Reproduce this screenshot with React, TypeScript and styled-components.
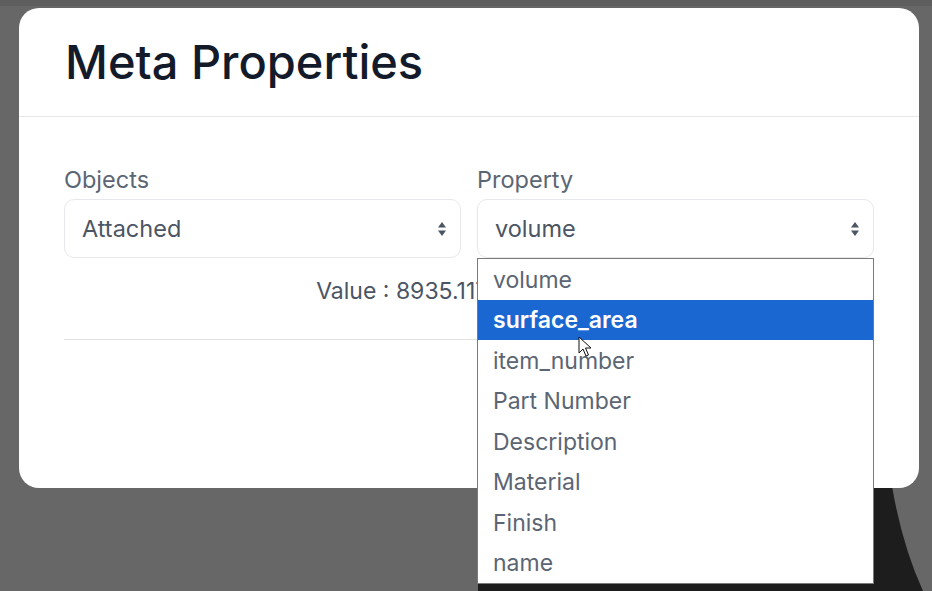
import React from "react";
import styled, { createGlobalStyle } from "styled-components";

const GlobalStyle = createGlobalStyle`
  html, body {
    margin: 0;
    padding: 0;
    background: #676767;
  }
  body {
    font-family: Inter, "Noto Sans", "Liberation Sans", sans-serif;
  }
`;

const Page = styled.div`
  position: relative;
  width: 932px;
  height: 591px;
  overflow: hidden;
  background: #676767;
  padding: 8px 0 0 19px;
  box-sizing: border-box;
`;

const Backdrop = styled.svg`
  position: absolute;
  left: 0;
  top: 0;
  width: 932px;
  height: 591px;
`;

const Modal = styled.div`
  position: relative;
  width: 900px;
  height: 480px;
  background: #ffffff;
  border-radius: 20px;
  box-sizing: border-box;
`;

const Header = styled.div`
  height: 109px;
  display: flex;
  align-items: center;
  padding: 0 0 0 46px;
  border-bottom: 1px solid #e7e7e7;
  box-sizing: border-box;
`;

const Title = styled.h1`
  margin: 0 0 2px;
  font-size: 47px;
  font-weight: 500;
  color: #131a2a;
`;

const Body = styled.div`
  padding: 47px 45px 0;
`;

const FieldRow = styled.div`
  display: grid;
  grid-template-columns: 1fr 1fr;
  column-gap: 16px;
`;

const Field = styled.div`
  position: relative;
  display: flex;
  flex-direction: column;
  gap: 4px;
`;

const Label = styled.label`
  font-size: 23.5px;
  line-height: 31px;
  color: #5b6675;
`;

const Select = styled.div`
  height: 59px;
  display: flex;
  align-items: center;
  justify-content: space-between;
  padding: 0 13px 0 17px;
  border: 1px solid #e6e8eb;
  border-radius: 10px;
  box-sizing: border-box;
  font-size: 23.5px;
  color: #4b5563;
`;

const ValueLine = styled.div`
  margin-top: 19px;
  text-align: center;
  font-size: 23px;
  line-height: 28px;
  color: #4b5563;
  white-space: nowrap;
`;

const Divider = styled.div`
  margin-top: 34px;
  height: 1px;
  background: #e2e2e2;
`;

const Dropdown = styled.ul`
  position: absolute;
  left: 0;
  right: 0;
  top: 94px;
  margin: 0;
  padding: 0;
  list-style: none;
  background: #ffffff;
  border: 1px solid #7a7a7a;
  z-index: 2;
`;

const Option = styled.li<{ $active?: boolean }>`
  height: 40.5px;
  display: flex;
  align-items: center;
  padding: 1px 15px 0;
  box-sizing: border-box;
  font-size: 23px;
  font-weight: ${(p) => (p.$active ? 600 : 400)};
  color: ${(p) => (p.$active ? "#ffffff" : "#5b6573")};
  background: ${(p) => (p.$active ? "#1a67d2" : "transparent")};
`;

const Cursor = styled.svg`
  position: absolute;
  left: 578px;
  top: 336px;
  width: 14px;
  height: 22px;
  z-index: 3;
`;

function SelectArrows() {
  return (
    <svg width="10" height="16" viewBox="0 0 10 16">
      <path d="M5 1 L9 6.5 L1 6.5 Z" fill="#4b5563" />
      <path d="M5 15 L9 9.5 L1 9.5 Z" fill="#4b5563" />
    </svg>
  );
}

const options = [
  "volume",
  "surface_area",
  "item_number",
  "Part Number",
  "Description",
  "Material",
  "Finish",
  "name"
];

export default function App() {
  return (
    <>
      <GlobalStyle />
      <Page>
        <Backdrop viewBox="0 0 932 591">
          <path
            d="M478 591 L478 578 Q620 520 870 486 L892 486 Q902 545 923 591 Z"
            fill="#1d1d1d"
          />
          <rect x="0" y="0" width="932" height="6" fill="#5e5e5e" />
        </Backdrop>
        <Modal>
          <Header>
            <Title>Meta Properties</Title>
          </Header>
          <Body>
            <FieldRow>
              <Field>
                <Label>Objects</Label>
                <Select>
                  <span>Attached</span>
                  <SelectArrows />
                </Select>
              </Field>
              <Field>
                <Label>Property</Label>
                <Select>
                  <span>volume</span>
                  <SelectArrows />
                </Select>
                <Dropdown>
                  {options.map((o) => (
                    <Option key={o} $active={o === "surface_area"}>
                      {o}
                    </Option>
                  ))}
                </Dropdown>
              </Field>
            </FieldRow>
            <ValueLine>Value : 8935.1177978515625</ValueLine>
            <Divider />
          </Body>
        </Modal>
        <Cursor viewBox="0 0 14 22">
          <path
            d="M1 1 L1 17 L5 13 L8 20 L10.5 19 L7.5 12 L13 12 Z"
            fill="#ffffff"
            stroke="#111111"
            strokeWidth="1"
            strokeLinejoin="round"
          />
        </Cursor>
      </Page>
    </>
  );
}
